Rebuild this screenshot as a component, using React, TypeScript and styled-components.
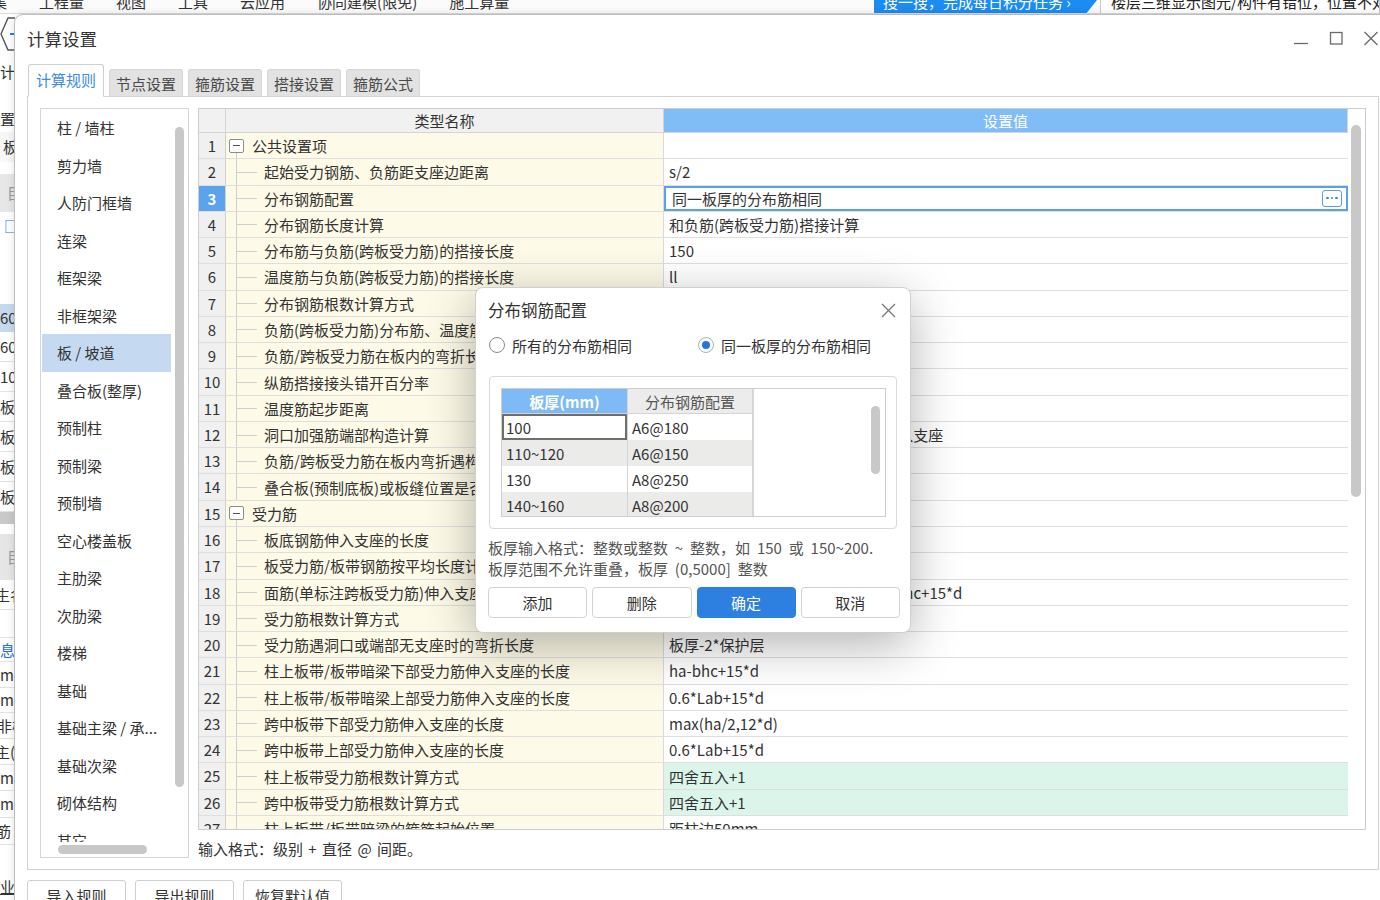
import styled, { createGlobalStyle } from 'styled-components';

const GlobalStyle = createGlobalStyle`
  html, body { margin: 0; padding: 0; background: #f2f2f2; }
  body {
    font-family: "Noto Sans CJK SC", "Noto Sans", "Liberation Sans", sans-serif;
    color: #333;
  }
  *, *::before, *::after { box-sizing: border-box; }
`;

type Row = {
  name: string;
  value: string;
  group?: boolean;
  green?: boolean;
  editing?: boolean;
};

const rows: Row[] = [
  { name: '公共设置项', value: '', group: true },
  { name: '起始受力钢筋、负筋距支座边距离', value: 's/2' },
  { name: '分布钢筋配置', value: '同一板厚的分布筋相同', editing: true },
  { name: '分布钢筋长度计算', value: '和负筋(跨板受力筋)搭接计算' },
  { name: '分布筋与负筋(跨板受力筋)的搭接长度', value: '150' },
  { name: '温度筋与负筋(跨板受力筋)的搭接长度', value: 'll' },
  { name: '分布钢筋根数计算方式', value: '向下取整+1' },
  { name: '负筋(跨板受力筋)分布筋、温度筋是否带弯钩', value: '否' },
  { name: '负筋/跨板受力筋在板内的弯折长度', value: '板厚-2*保护层' },
  { name: '纵筋搭接接头错开百分率', value: '50%' },
  { name: '温度筋起步距离', value: 's' },
  { name: '洞口加强筋端部构造计算', value: '短向加强筋伸入支座,长向加强筋伸入支座' },
  { name: '负筋/跨板受力筋在板内弯折遇构件时的处理', value: '按设计要求' },
  { name: '叠合板(预制底板)或板缝位置是否计算受力筋', value: '是' },
  { name: '受力筋', value: '', group: true },
  { name: '板底钢筋伸入支座的长度', value: 'max(ha/2,5*d)' },
  { name: '板受力筋/板带钢筋按平均长度计算', value: '否' },
  { name: '面筋(单标注跨板受力筋)伸入支座的锚固长度', value: '能直锚就直锚,否则按公式计算:ha-bhc+15*d' },
  { name: '受力筋根数计算方式', value: '向上取整+1' },
  { name: '受力筋遇洞口或端部无支座时的弯折长度', value: '板厚-2*保护层' },
  { name: '柱上板带/板带暗梁下部受力筋伸入支座的长度', value: 'ha-bhc+15*d' },
  { name: '柱上板带/板带暗梁上部受力筋伸入支座的长度', value: '0.6*Lab+15*d' },
  { name: '跨中板带下部受力筋伸入支座的长度', value: 'max(ha/2,12*d)' },
  { name: '跨中板带上部受力筋伸入支座的长度', value: '0.6*Lab+15*d' },
  { name: '柱上板带受力筋根数计算方式', value: '四舍五入+1', green: true },
  { name: '跨中板带受力筋根数计算方式', value: '四舍五入+1', green: true },
  { name: '柱上板带/板带暗梁的箍筋起始位置', value: '距柱边50mm' },
];

const categories = [
  '柱 / 墙柱', '剪力墙', '人防门框墙', '连梁', '框架梁', '非框架梁', '板 / 坡道',
  '叠合板(整厚)', '预制柱', '预制梁', '预制墙', '空心楼盖板', '主肋梁', '次肋梁',
  '楼梯', '基础', '基础主梁 / 承...', '基础次梁', '砌体结构', '其它',
];

const thickness = [
  { t: '100', cfg: 'A6@180' },
  { t: '110~120', cfg: 'A6@150' },
  { t: '130', cfg: 'A8@250' },
  { t: '140~160', cfg: 'A8@200' },
];

const menus = ['集', '工程量', '视图', '工具', '云应用', '协同建模(限免)', '施工算量'];

type SideBit = { h: number; text?: string; bg?: string; color?: string; shift?: number; line?: boolean; under?: boolean };

const sideBits: SideBit[] = [
  { h: 38 },
  { h: 40, text: '计算' },
  { h: 14 },
  { h: 26, text: '设置', shift: -15 },
  { h: 30, text: '板', bg: '#f7f7f7', shift: 3 },
  { h: 12 },
  { h: 38, text: '目', bg: '#e7e7e7', shift: 7, color: '#999' },
  { h: 28, text: '□', color: '#2a7de0', shift: 4 },
  { h: 64 },
  { h: 28, text: '60', bg: '#c5daf0' },
  { h: 30, text: '60', line: true },
  { h: 30, text: '10', line: true },
  { h: 30, text: '板', line: true },
  { h: 30, text: '板', line: true },
  { h: 30, text: '板', line: true },
  { h: 30, text: '板', line: true },
  { h: 12, bg: '#c9c9c9' },
  { h: 10 },
  { h: 46, text: '目', bg: '#e6e6e6', shift: 7, color: '#999' },
  { h: 30, text: '生名', shift: -5, line: true },
  { h: 28, line: true },
  { h: 24, text: '息', color: '#2a6fd8', line: true },
  { h: 26, text: 'mm', line: true },
  { h: 25, text: 'mm', line: true },
  { h: 26, text: '非楼', shift: -3, line: true },
  { h: 26, text: '主(', shift: -5, line: true },
  { h: 26, text: 'mm', line: true },
  { h: 27, text: 'mm', line: true },
  { h: 27, text: '筋', shift: -4, line: true },
  { h: 28 },
  { h: 27, text: '业', under: true },
];

export default function App() {
  return (
    <>
      <GlobalStyle />
      <Desktop>
        <MenuStrip>
          <MenuGroup>
            {menus.map((m) => (
              <MenuItem key={m}>
                <Cut>{m}</Cut>
              </MenuItem>
            ))}
          </MenuGroup>
          <SearchGroup>
            <SearchTip>
              <Cut>搜一搜，完成每日积分任务 ›</Cut>
            </SearchTip>
            <SearchField>
              <Cut>楼层三维显示图元/构件有错位，位置不对</Cut>
            </SearchField>
          </SearchGroup>
        </MenuStrip>

        <BackSide>
          {sideBits.map((b, i) =>
            i === 0 ? (
              <SideBit key={i} $h={b.h}>
                <svg width="16" height="36" viewBox="0 0 16 36">
                  <path d="M15 3 L8 3 L1 19 L8 35 L15 35" fill="none" stroke="#555" strokeWidth="1.4" />
                  <path d="M10 19 L16 19" stroke="#2a7de0" strokeWidth="2" />
                </svg>
              </SideBit>
            ) : (
              <SideBit key={i} $h={b.h} $bg={b.bg} $line={b.line}>
                {b.text && (
                  <SideText $shift={b.shift ?? 0} $color={b.color} $under={b.under}>
                    {b.text}
                  </SideText>
                )}
              </SideBit>
            )
          )}
        </BackSide>

        <Window>
          <TitleBar>
            <Title>计算设置</Title>
            <Controls>
              <svg width="16" height="16" viewBox="0 0 16 16">
                <path d="M1 13.5 H15" stroke="#6a6a6a" strokeWidth="1.3" />
              </svg>
              <svg width="16" height="16" viewBox="0 0 16 16">
                <rect x="2.5" y="2.5" width="11.5" height="11.5" fill="none" stroke="#6a6a6a" strokeWidth="1.3" />
              </svg>
              <svg width="16" height="16" viewBox="0 0 16 16">
                <path d="M1.5 2 L14.5 15 M14.5 2 L1.5 15" stroke="#6a6a6a" strokeWidth="1.3" />
              </svg>
            </Controls>
          </TitleBar>

          <TabRow>
            <Tab $active>计算规则</Tab>
            <Tab>节点设置</Tab>
            <Tab>箍筋设置</Tab>
            <Tab>搭接设置</Tab>
            <Tab>箍筋公式</Tab>
          </TabRow>

          <Panel>
            <ListBox>
              <ListContent>
                {categories.map((c) => (
                  <ListItem key={c} $selected={c === '板 / 坡道'}>
                    {c}
                  </ListItem>
                ))}
              </ListContent>
              <VTrack $pad="18px 3px 0 3px">
                <Thumb $w={9} $h={660} />
              </VTrack>
              <HTrack $pad="3px 0 0 17px">
                <Thumb $w={89} $h={9} />
              </HTrack>
              <Corner />
            </ListBox>

            <RightCol>
              <GridBox>
                <TableArea>
                  <HeadRow>
                    <HeadCell />
                    <HeadCell>类型名称</HeadCell>
                    <HeadCell $blue>设置值</HeadCell>
                  </HeadRow>
                  {rows.map((r, i) => (
                    <BodyRow key={i}>
                      <NumCell $selected={r.editing}>{i + 1}</NumCell>
                      <NameCell>
                        {r.group ? (
                          <GroupGuide>
                            <ExpandBox />
                          </GroupGuide>
                        ) : (
                          <ChildGuide />
                        )}
                        {r.name}
                      </NameCell>
                      {r.editing ? (
                        <ValueCell $edit>
                          <EditBox>
                            {r.value}
                            <MoreBtn>
                              <i />
                              <i />
                              <i />
                            </MoreBtn>
                          </EditBox>
                        </ValueCell>
                      ) : (
                        <ValueCell $green={r.green}>{r.value}</ValueCell>
                      )}
                    </BodyRow>
                  ))}
                </TableArea>
                <VTrack $pad="16px 3px 0 3px">
                  <Thumb $w={10} $h={372} />
                </VTrack>
              </GridBox>
              <Hint>输入格式：级别 + 直径 @ 间距。</Hint>
            </RightCol>
          </Panel>

          <FooterRow>
            <FootButton>导入规则</FootButton>
            <FootButton>导出规则</FootButton>
            <FootButton>恢复默认值</FootButton>
          </FooterRow>

          <Popup>
            <PopTitleRow>
              <PopTitle>分布钢筋配置</PopTitle>
              <svg width="15" height="15" viewBox="0 0 15 15">
                <path d="M1 1 L14 14 M14 1 L1 14" stroke="#777" strokeWidth="1.3" />
              </svg>
            </PopTitleRow>
            <RadioRow>
              <RadioLabel>
                <Radio />
                所有的分布筋相同
              </RadioLabel>
              <RadioLabel>
                <Radio $on />
                同一板厚的分布筋相同
              </RadioLabel>
            </RadioRow>
            <GroupBox>
              <InnerTable>
                <InnerCols>
                  <InnerRow>
                    <InnerHead $blue>板厚(mm)</InnerHead>
                    <InnerHead>分布钢筋配置</InnerHead>
                  </InnerRow>
                  {thickness.map((t, i) => (
                    <InnerRow key={t.t} $shade={i % 2 === 1}>
                      <InnerCell $focus={i === 0}>{t.t}</InnerCell>
                      <InnerCell>{t.cfg}</InnerCell>
                    </InnerRow>
                  ))}
                </InnerCols>
                <InnerBlank>
                  <Thumb $w={9} $h={68} />
                </InnerBlank>
              </InnerTable>
            </GroupBox>
            <PopHint>
              板厚输入格式：整数或整数 ~ 整数，如 150 或 150~200.
              <br />
              板厚范围不允许重叠，板厚 (0,5000] 整数
            </PopHint>
            <PopButtons>
              <PopButton>添加</PopButton>
              <PopButton>删除</PopButton>
              <PopButton $primary>确定</PopButton>
              <PopButton>取消</PopButton>
            </PopButtons>
          </Popup>
        </Window>
      </Desktop>
    </>
  );
}

const Desktop = styled.div`
  position: relative;
  width: 1380px;
  height: 900px;
  overflow: hidden;
  background: #f4f4f4;
  display: flex;
  flex-direction: column;
`;

const MenuStrip = styled.div`
  flex: none;
  height: 14px;
  display: flex;
  overflow: hidden;
  background: #fbfbfb;
  border-bottom: 1px solid #dcdcdc;
`;

const MenuGroup = styled.div`
  display: flex;
  gap: 32px;
`;

const MenuItem = styled.span`
  font-size: 15px;
  color: #333;
  &:first-child {
    margin-left: -8px;
  }
`;

const Cut = styled.span`
  display: block;
  margin-top: -8px;
  line-height: 20px;
  white-space: nowrap;
`;

const SearchGroup = styled.div`
  margin-left: auto;
  display: flex;
  gap: 3px;
`;

const SearchTip = styled.div`
  width: 223px;
  height: 14px;
  overflow: hidden;
  padding-left: 9px;
  background: #1b8cf2;
  color: #fff;
  font-size: 15px;
  clip-path: polygon(0 0, 100% 0, 95% 100%, 0 100%);
`;

const SearchField = styled.div`
  width: 280px;
  height: 14px;
  overflow: hidden;
  padding-left: 10px;
  background: #fff;
  border: 1px solid #c9c9c9;
  border-top: none;
  color: #222;
  font-size: 15px;
`;

const BackSide = styled.div`
  width: 60px;
  display: flex;
  flex-direction: column;
  overflow: hidden;
  background: #fff;
`;

const SideBit = styled.div<{ $h: number; $bg?: string; $line?: boolean }>`
  flex: none;
  height: ${(p) => p.$h}px;
  display: flex;
  align-items: center;
  background: ${(p) => p.$bg ?? 'transparent'};
  border-bottom: ${(p) => (p.$line ? '1px solid #e3e3e3' : 'none')};
  overflow: hidden;
`;

const SideText = styled.span<{ $shift: number; $color?: string; $under?: boolean }>`
  margin-left: ${(p) => p.$shift}px;
  font-size: 15px;
  line-height: 20px;
  white-space: nowrap;
  color: ${(p) => p.$color ?? '#333'};
  text-decoration: ${(p) => (p.$under ? 'underline' : 'none')};
`;

const Window = styled.div`
  position: absolute;
  left: 14px;
  top: 14px;
  width: 1372px;
  height: 900px;
  background: #fff;
  border: 1px solid #bdbdbd;
  border-radius: 9px 0 0 0;
  box-shadow: 0 0 8px rgba(0, 0, 0, 0.12);
  display: flex;
  flex-direction: column;
`;

const TitleBar = styled.div`
  flex: none;
  height: 49px;
  display: flex;
  align-items: center;
  padding: 0 6px 0 12px;
`;

const Title = styled.div`
  font-size: 17.5px;
  line-height: 24px;
  color: #333;
  margin-top: -2px;
`;

const Controls = styled.div`
  margin-left: auto;
  margin-top: -3px;
  display: flex;
  gap: 19px;
`;

const TabRow = styled.div`
  flex: none;
  height: 32px;
  display: flex;
  align-items: flex-end;
  gap: 5px;
  padding-left: 13px;
`;

const Tab = styled.div<{ $active?: boolean }>`
  position: relative;
  z-index: 1;
  width: ${(p) => (p.$active ? 76 : 74)}px;
  height: ${(p) => (p.$active ? 33 : 27)}px;
  margin-bottom: ${(p) => (p.$active ? -1 : 0)}px;
  display: flex;
  align-items: center;
  justify-content: center;
  padding-bottom: ${(p) => (p.$active ? 3 : 0)}px;
  font-size: 15px;
  color: ${(p) => (p.$active ? '#3e8ce2' : '#4a4a4a')};
  background: ${(p) => (p.$active ? '#fff' : '#e2e2e2')};
  border: 1px solid ${(p) => (p.$active ? '#cfcfcf' : '#d6d6d6')};
  border-bottom: ${(p) => (p.$active ? '1px solid #fff' : 'none')};
  border-radius: 3px 3px 0 0;
`;

const Panel = styled.div`
  flex: none;
  margin-left: 12px;
  width: 1352px;
  height: 774px;
  border: 1px solid #d2d2d2;
  padding: 11px 12px;
  display: grid;
  grid-template-columns: 149px 1fr;
  column-gap: 9px;
`;

const ListBox = styled.div`
  height: 750px;
  border: 1px solid #d6d6d6;
  display: grid;
  grid-template-columns: 1fr 16px;
  grid-template-rows: 1fr 15px;
  overflow: hidden;
`;

const ListContent = styled.div`
  overflow: hidden;
`;

const ListItem = styled.div<{ $selected?: boolean }>`
  height: 37.5px;
  margin: 0 1px;
  padding-left: 15px;
  display: flex;
  align-items: center;
  font-size: 15px;
  color: #333;
  white-space: nowrap;
  background: ${(p) => (p.$selected ? '#c5daf0' : 'transparent')};
`;

const VTrack = styled.div<{ $pad: string }>`
  padding: ${(p) => p.$pad};
  background: #fff;
`;

const HTrack = styled.div<{ $pad: string }>`
  padding: ${(p) => p.$pad};
  background: #fff;
`;

const Corner = styled.div`
  background: #fff;
`;

const Thumb = styled.div<{ $w: number; $h: number }>`
  width: ${(p) => p.$w}px;
  height: ${(p) => p.$h}px;
  border-radius: 5px;
  background: #c8c8c8;
`;

const RightCol = styled.div`
  display: flex;
  flex-direction: column;
`;

const GridBox = styled.div`
  flex: none;
  height: 722px;
  border: 1px solid #cdcdcd;
  display: grid;
  grid-template-columns: 1fr 17px;
  overflow: hidden;
`;

const TableArea = styled.div`
  display: flex;
  flex-direction: column;
  overflow: hidden;
`;

const HeadRow = styled.div`
  flex: none;
  height: 24px;
  display: grid;
  grid-template-columns: 27px 438px 1fr;
  border-bottom: 1px solid #d4d4d4;
`;

const HeadCell = styled.div<{ $blue?: boolean }>`
  font-size: 15px;
  line-height: 23px;
  text-align: center;
  color: ${(p) => (p.$blue ? '#fff' : '#333')};
  background: ${(p) => (p.$blue ? '#80bdf7' : '#f1f1f1')};
  border-right: 1px solid #d4d4d4;
`;

const BodyRow = styled.div`
  flex: none;
  height: 26.28px;
  display: grid;
  grid-template-columns: 27px 438px 1fr;
  border-bottom: 1px solid #dedede;
`;

const NumCell = styled.div<{ $selected?: boolean }>`
  font-size: 15px;
  line-height: 25px;
  text-align: center;
  color: ${(p) => (p.$selected ? '#fff' : '#333')};
  font-weight: ${(p) => (p.$selected ? 700 : 400)};
  background: ${(p) => (p.$selected ? '#5ca3ee' : '#f0f0f0')};
  border-right: 1px solid #d0d0d0;
`;

const NameCell = styled.div`
  display: flex;
  align-items: center;
  font-size: 15px;
  color: #333;
  white-space: nowrap;
  overflow: hidden;
  background: #fdfae7;
  border-right: 1px solid #dadada;
`;

const ChildGuide = styled.span`
  position: relative;
  flex: none;
  align-self: stretch;
  width: 38px;
  &::before {
    content: '';
    position: absolute;
    left: 10px;
    top: 0;
    bottom: -1px;
    width: 1px;
    background: #cfcfcf;
  }
  &::after {
    content: '';
    position: absolute;
    left: 11px;
    top: 50%;
    width: 20px;
    height: 1px;
    background: #cfcfcf;
  }
`;

const GroupGuide = styled.span`
  position: relative;
  flex: none;
  align-self: stretch;
  width: 26px;
  display: flex;
  align-items: center;
  padding-left: 3px;
  &::before {
    content: '';
    position: absolute;
    left: 10px;
    top: calc(50% + 7px);
    bottom: -1px;
    width: 1px;
    background: #cfcfcf;
  }
`;

const ExpandBox = styled.span`
  width: 15px;
  height: 14px;
  border: 1px solid #8c8c8c;
  border-radius: 2px;
  background: #fff;
  display: flex;
  align-items: center;
  justify-content: center;
  &::after {
    content: '';
    width: 7px;
    height: 1px;
    background: #555;
  }
`;

const ValueCell = styled.div<{ $green?: boolean; $edit?: boolean }>`
  display: flex;
  align-items: center;
  padding-left: ${(p) => (p.$edit ? 0 : 5)}px;
  font-size: 15px;
  color: #333;
  white-space: nowrap;
  overflow: hidden;
  background: ${(p) => (p.$green ? '#dcf5ea' : '#fff')};
`;

const EditBox = styled.div`
  flex: 1;
  align-self: stretch;
  display: flex;
  align-items: center;
  padding: 0 4px 0 6px;
  border: 2px solid #5aa0ea;
`;

const MoreBtn = styled.span`
  margin-left: auto;
  width: 20px;
  height: 17px;
  border: 1.5px solid #5b9be6;
  border-radius: 3px;
  display: flex;
  align-items: center;
  justify-content: center;
  gap: 2px;
  & i {
    width: 2.5px;
    height: 2.5px;
    border-radius: 50%;
    background: #3d84d8;
  }
`;

const Hint = styled.div`
  margin-top: 9px;
  font-size: 15px;
  line-height: 20px;
  color: #333;
  word-spacing: 2px;
`;

const FooterRow = styled.div`
  flex: none;
  margin-top: 10px;
  padding-left: 12px;
  display: flex;
  gap: 9px;
`;

const FootButton = styled.div`
  width: 99px;
  height: 30px;
  display: flex;
  align-items: center;
  justify-content: center;
  font-size: 15px;
  color: #333;
  background: #fff;
  border: 1px solid #cfcfcf;
  border-radius: 3px;
`;

const Popup = styled.div`
  position: absolute;
  left: 460px;
  top: 272px;
  z-index: 5;
  width: 436px;
  height: 346px;
  padding: 0 10px 0 12px;
  background: #fff;
  border: 1px solid #cfcfcf;
  border-radius: 8px;
  box-shadow: 0 12px 50px rgba(0, 0, 0, 0.3);
  display: flex;
  flex-direction: column;
`;

const PopTitleRow = styled.div`
  flex: none;
  height: 45px;
  display: flex;
  align-items: center;
  justify-content: space-between;
  padding-right: 4px;
`;

const PopTitle = styled.div`
  font-size: 16.5px;
  color: #333;
  margin-top: -2px;
`;

const RadioRow = styled.div`
  flex: none;
  height: 26px;
  margin-top: -1px;
  display: grid;
  grid-template-columns: 209px auto;
  align-items: center;
  padding-left: 1px;
`;

const RadioLabel = styled.label`
  display: flex;
  align-items: center;
  gap: 7px;
  font-size: 15px;
  color: #333;
  white-space: nowrap;
`;

const Radio = styled.span<{ $on?: boolean }>`
  width: 16px;
  height: 16px;
  border-radius: 50%;
  border: 1px solid ${(p) => (p.$on ? '#a7b0ba' : '#8a8a8a')};
  background: #fff;
  display: inline-flex;
  align-items: center;
  justify-content: center;
  &::after {
    content: '';
    width: 8px;
    height: 8px;
    border-radius: 50%;
    background: ${(p) => (p.$on ? '#1f78e0' : 'transparent')};
  }
`;

const GroupBox = styled.div`
  flex: none;
  margin: 18px 3px 0 1px;
  height: 153px;
  padding: 11px 10px 11px 11px;
  border: 1px solid #d9d9d9;
  border-radius: 4px;
`;

const InnerTable = styled.div`
  height: 129px;
  border: 1px solid #cfcfcf;
  display: grid;
  grid-template-columns: 252px 1fr;
  overflow: hidden;
`;

const InnerCols = styled.div`
  display: flex;
  flex-direction: column;
  border-right: 1px solid #d8d8d8;
`;

const InnerRow = styled.div<{ $shade?: boolean }>`
  flex: none;
  height: 26px;
  display: grid;
  grid-template-columns: 126px 1fr;
  background: ${(p) => (p.$shade ? '#ebebea' : '#fff')};
  &:first-child {
    height: 25px;
  }
`;

const InnerHead = styled.div<{ $blue?: boolean }>`
  display: flex;
  align-items: center;
  justify-content: center;
  font-size: 15px;
  font-weight: ${(p) => (p.$blue ? 700 : 400)};
  color: ${(p) => (p.$blue ? '#fff' : '#555')};
  background: ${(p) => (p.$blue ? '#7ebbf6' : '#ececec')};
  border-right: 1px solid #d4d4d4;
  border-bottom: 1px solid #d4d4d4;
`;

const InnerCell = styled.div<{ $focus?: boolean }>`
  display: flex;
  align-items: center;
  padding-left: 4px;
  font-size: 15px;
  color: #333;
  border-right: 1px solid #d4d4d4;
  box-shadow: ${(p) => (p.$focus ? 'inset 0 0 0 2px #6e6e6e' : 'none')};
  background: ${(p) => (p.$focus ? '#fff' : 'transparent')};
`;

const InnerBlank = styled.div`
  background: #fff;
  padding: 17px 0 0 117px;
`;

const PopHint = styled.div`
  flex: none;
  margin-top: 8px;
  font-size: 15px;
  line-height: 21px;
  color: #555;
  white-space: nowrap;
  word-spacing: 3.5px;
`;

const PopButtons = styled.div`
  flex: none;
  margin-top: 8px;
  display: grid;
  grid-template-columns: repeat(4, 1fr);
  gap: 5px;
`;

const PopButton = styled.div<{ $primary?: boolean }>`
  height: 31px;
  display: flex;
  align-items: center;
  justify-content: center;
  font-size: 15px;
  color: ${(p) => (p.$primary ? '#fff' : '#333')};
  background: ${(p) => (p.$primary ? '#2d7fe0' : '#fff')};
  border: 1px solid ${(p) => (p.$primary ? '#2d7fe0' : '#d2d2d2')};
  border-radius: 4px;
`;
